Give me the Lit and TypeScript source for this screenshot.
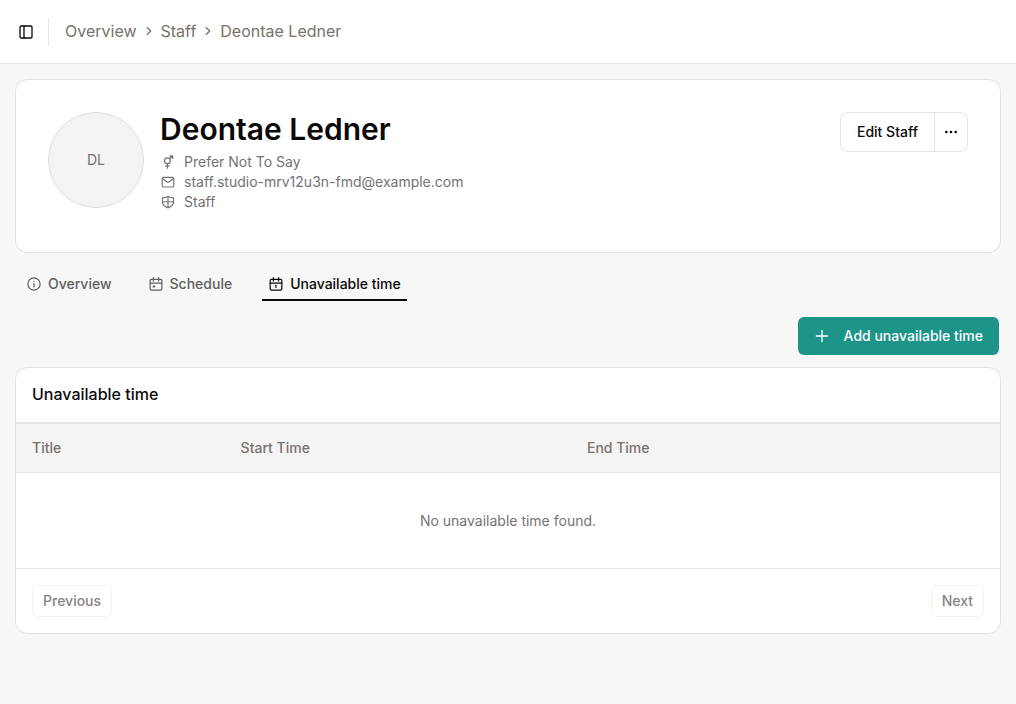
import { LitElement, html, css, svg } from "lit";
import { customElement, property } from "lit/decorators.js";

const icons = {
  panel: svg`<rect x="3" y="3" width="18" height="18" rx="2"/><path d="M9 3v18"/>`,
  chevron: svg`<path d="m9 18 6-6-6-6"/>`,
  gender: svg`<circle cx="11" cy="10" r="5"/><path d="M11 15v7.500M8 19h6M14.500 6.500 20 1.500M15.500 1.500H20V6M16.500 2.500l3 3"/>`,
  mail: svg`<rect x="2" y="4" width="20" height="16.500" rx="2.500"/><path d="m3 6.500 7 5a3.500 3.500 0 0 0 4 0l7-5"/>`,
  shield: svg`<path d="M12 2C9 4 6 4.800 2.500 5V12c0 5 4 8 9.500 10 5.500-2 9.500-5 9.500-10V5C18 4.800 15 4 12 2ZM12 2v20M2.500 11.500h19"/>`,
  info: svg`<circle cx="12" cy="12" r="10.500"/><path d="M11 11.500h1V17M12 7.500v.4"/>`,
  calendar: svg`<rect x="2" y="4" width="20" height="18.500" rx="2"/><path d="M7.500 1v6M16.500 1v6M2 10.500h20M7.500 15.500h2v1.500h-2Z"/>`,
  calendarBlock: svg`<rect x="2" y="4" width="20" height="18.500" rx="2"/><path d="M7.500 1v6M16.500 1v6M2 10.500h20M11 14.500h1V18"/>`,
  plus: svg`<path d="M12 3.500v17M3.500 12h17"/>`,
  more: svg`<circle cx="5" cy="12" r="1"/><circle cx="12" cy="12" r="1"/><circle cx="19" cy="12" r="1"/>`,
};

@customElement("ui-icon")
export class UiIcon extends LitElement {
  @property() name: keyof typeof icons = "info";

  static styles = css`
    :host { display: inline-flex; flex: none; width: 16px; height: 16px; }
    svg {
      width: 100%; height: 100%; fill: none; stroke: currentColor; overflow: visible;
      stroke-width: 2; stroke-linecap: round; stroke-linejoin: round;
    }
  `;

  render() {
    return html`<svg viewBox="0 0 24 24" aria-hidden="true">${icons[this.name]}</svg>`;
  }
}

@customElement("app-root")
export class AppRoot extends LitElement {
  static styles = css`
    :host {
      display: flex; flex-direction: column; min-height: 100vh;
      background: #f7f7f7; color: #0c0a09;
      font: 14px/20px Inter, "Liberation Sans", sans-serif;
    }
    * { box-sizing: border-box; }
    button { font: inherit; color: inherit; background: none; border: 0; margin: 0; padding: 0; cursor: pointer; }
    a { color: inherit; text-decoration: none; }
    h1, h2, ul, ol { margin: 0; padding: 0; list-style: none; }

    .topbar {
      display: flex; align-items: center; height: 64px; padding: 0 16px;
      background: #fff; border-bottom: 1px solid #e5e5e5;
    }
    .toggle { display: flex; align-items: center; justify-content: center; width: 20px; height: 28px; }
    .rule { width: 1px; height: 28px; margin: 0 16px 0 12px; background: #e5e5e5; }
    .crumbs { display: flex; align-items: center; gap: 5px; padding-bottom: 2px; font-size: 16px; line-height: 24px; color: #78716c; }
    .crumbs li { display: flex; align-items: center; gap: 5px; }
    .crumbs ui-icon { width: 14px; height: 14px; }

    .main { display: flex; flex-direction: column; padding: 16px; }
    .card { background: #fff; border-radius: 12px; box-shadow: 0 0 0 1px #e2e2e2; overflow: hidden; }

    .profile { display: flex; align-items: flex-start; gap: 16px; padding: 32px 32px 40px; }
    .avatar {
      display: flex; align-items: center; justify-content: center; flex: none;
      width: 96px; height: 96px; border-radius: 50%;
      background: #f4f4f4; border: 1px solid #e2e2e2; color: #737373;
    }
    .person { flex: 1; min-width: 0; }
    .person h1 { font-size: 30px; line-height: 34px; font-weight: 600; margin-bottom: 6px; }
    .person li { display: flex; align-items: center; gap: 8px; color: #737373; }
    .person ui-icon { width: 16px; height: 14px; }
    .actions { display: flex; height: 40px; border: 1px solid #e5e5e5; border-radius: 8px; font-weight: 500; }
    .edit { padding: 0 16px; }
    .more { display: flex; align-items: center; justify-content: center; width: 33px; border-left: 1px solid #e5e5e5; }

    .tabs { display: flex; gap: 24px; margin: 16px 0; padding-left: 4px; }
    .tab {
      display: flex; align-items: center; gap: 7px; height: 33px; padding: 0 6px 0 7px;
      font-weight: 500; color: #5f5f5f; border-bottom: 2px solid transparent;
    }
    .tab ui-icon { width: 14px; height: 14px; }
    .tab[aria-selected="true"] { color: #0c0a09; border-color: #0c0a09; }

    .toolbar { display: flex; justify-content: flex-end; padding: 0 1px; margin-bottom: 13px; }
    .add {
      display: flex; align-items: center; gap: 14px; height: 38px; padding: 0 16px;
      border-radius: 6px; background: #1c9488; color: #fff; font-weight: 500;
    }
    .heading { padding: 14px 16px 16px; font-size: 16px; line-height: 24px; font-weight: 500; }
    .table { width: 100%; border-collapse: separate; border-spacing: 0; table-layout: fixed; }
    .table th {
      height: 51px; padding: 0 16px; text-align: left; font-weight: 500; color: #78716c;
      background: #f4f4f4; border-top: 2px solid #e5e5e5; border-bottom: 1px solid #e5e5e5;
    }
    .col-title { width: 21.2%; }
    .col-start { width: 35.2%; }
    .table td { height: 96px; padding: 0; text-align: center; color: #737373; border-bottom: 1px solid #e5e5e5; }
    .pager { display: flex; justify-content: space-between; padding: 16px; }
    .page { height: 32px; padding: 0 10px; border: 1px solid #f2f2f2; border-radius: 6px; font-weight: 500; color: #858483; }
  `;

  render() {
    return html`
      <header class="topbar">
        <button class="toggle" aria-label="Toggle sidebar"><ui-icon name="panel"></ui-icon></button>
        <span class="rule"></span>
        <nav aria-label="Breadcrumb">
          <ol class="crumbs">
            <li><a href="#overview">Overview</a></li>
            <li><ui-icon name="chevron"></ui-icon><a href="#staff">Staff</a></li>
            <li><ui-icon name="chevron"></ui-icon><a href="#profile">Deontae Ledner</a></li>
          </ol>
        </nav>
      </header>
      <main class="main">
        <section class="card profile">
          <div class="avatar">DL</div>
          <div class="person">
            <h1>Deontae Ledner</h1>
            <ul>
              <li><ui-icon name="gender"></ui-icon>Prefer Not To Say</li>
              <li><ui-icon name="mail"></ui-icon>staff.studio-mrv12u3n-fmd@example.com</li>
              <li><ui-icon name="shield"></ui-icon>Staff</li>
            </ul>
          </div>
          <div class="actions">
            <button class="edit">Edit Staff</button>
            <button class="more" aria-label="More actions"><ui-icon name="more"></ui-icon></button>
          </div>
        </section>
        <div class="tabs" role="tablist">
          <button class="tab" role="tab" aria-selected="false"><ui-icon name="info"></ui-icon>Overview</button>
          <button class="tab" role="tab" aria-selected="false"><ui-icon name="calendar"></ui-icon>Schedule</button>
          <button class="tab" role="tab" aria-selected="true"><ui-icon name="calendarBlock"></ui-icon>Unavailable time</button>
        </div>
        <div class="toolbar">
          <button class="add"><ui-icon name="plus"></ui-icon>Add unavailable time</button>
        </div>
        <section class="card">
          <h2 class="heading">Unavailable time</h2>
          <table class="table">
            <thead>
              <tr><th class="col-title">Title</th><th class="col-start">Start Time</th><th>End Time</th></tr>
            </thead>
            <tbody>
              <tr><td colspan="3">No unavailable time found.</td></tr>
            </tbody>
          </table>
          <div class="pager">
            <button class="page" disabled>Previous</button>
            <button class="page" disabled>Next</button>
          </div>
        </section>
      </main>
    `;
  }
}
